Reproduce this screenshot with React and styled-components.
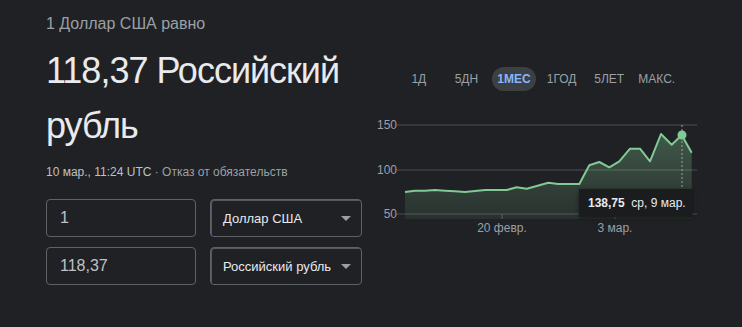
import React from 'react'
import styled, { createGlobalStyle } from 'styled-components'

const GlobalStyle = createGlobalStyle`
  body {
    margin: 0;
    background: #202124;
    font-family: "Liberation Sans", Arial, sans-serif;
  }
`

const tabs = ['1Д', '5ДН', '1МЕС', '1ГОД', '5ЛЕТ', 'МАКС.']

// points of the 1 month chart, in svg coords
const points = [
  [25, 77], [35, 75.7], [45, 75.7], [55, 75], [65, 75.7], [75, 76.3], [85, 77],
  [95, 76], [105, 75], [115, 75], [126.7, 75], [136.7, 72.3], [146.7, 73.7],
  [156.7, 71], [168.3, 67.7], [178.3, 69], [188.3, 69], [199.3, 69],
  [209.3, 50.3], [219.3, 47], [229.3, 52.3], [239.3, 46.3], [250, 33.7],
  [260, 33.7], [270, 46.3], [281, 19], [291.7, 29.7], [301.7, 20], [311.7, 37.7],
]

const grid = [
  { y: 10, label: '150' },
  { y: 55, label: '100' },
  { y: 99, label: '50' },
]

function Chart() {
  const line = points.map(p => p.join(',')).join(' ')
  const first = points[0]
  const last = points[points.length - 1]
  const area = `M${first[0]},104 L${line.replace(/ /g, ' L')} L${last[0]},104 Z`

  return (
    <ChartBox>
      <svg width="325" height="122" viewBox="-6 0 325 122">
        <defs>
          <linearGradient id="fill" x1="0" y1="19" x2="0" y2="104" gradientUnits="userSpaceOnUse">
            <stop offset="0" stopColor="#81c995" stopOpacity="0.33" />
            <stop offset="1" stopColor="#81c995" stopOpacity="0.09" />
          </linearGradient>
        </defs>
        {grid.map(g => (
          <g key={g.label}>
            <line x1="17" x2="317" y1={g.y} y2={g.y} stroke="#3c4043" strokeWidth="1.5" />
            <text x="17" y={g.y + 4} textAnchor="end" fontSize="12" fill="#9aa0a6"
              fontFamily="Liberation Sans, Arial, sans-serif">{g.label}</text>
          </g>
        ))}
        <path d={area} fill="url(#fill)" />
        <polyline points={line} fill="none" stroke="#81c995" strokeWidth="2" strokeLinejoin="round" />
        <line x1="302" x2="302" y1="10" y2="76" stroke="#9aa0a6" strokeWidth="1" strokeDasharray="2 2" />
        <circle cx="302" cy="20" r="4.5" fill="#81c995" />
        <line x1="122" x2="122" y1="99" y2="104" stroke="#5f6368" />
        <line x1="235" x2="235" y1="99" y2="104" stroke="#5f6368" />
        <text x="122" y="117" textAnchor="middle" fontSize="12" fill="#9aa0a6"
          fontFamily="Liberation Sans, Arial, sans-serif">20 февр.</text>
        <text x="235" y="117" textAnchor="middle" fontSize="12" fill="#9aa0a6"
          fontFamily="Liberation Sans, Arial, sans-serif">3 мар.</text>
      </svg>
      <Tooltip>
        <b>138,75</b>&nbsp; ср, 9 мар.
      </Tooltip>
    </ChartBox>
  )
}

function Select({ value }) {
  return (
    <SelectBox>
      <span>{value}</span>
      <svg width="10" height="5" viewBox="0 0 10 5">
        <path d="M0 0 L10 0 L5 5 Z" fill="#9aa0a6" />
      </svg>
    </SelectBox>
  )
}

export default function App() {
  return (
    <>
      <GlobalStyle />
      <Page>
        <Left>
          <Subtitle>1 Доллар США равно</Subtitle>
          <Result>118,37 Российский рубль</Result>
          <Meta>
            <span>10 мар., 11:24 UTC</span> · Отказ от обязательств
          </Meta>
          <Form>
            <Row>
              <Input>1</Input>
              <Select value="Доллар США" />
            </Row>
            <Row>
              <Input>118,37</Input>
              <Select value="Российский рубль" />
            </Row>
          </Form>
        </Left>
        <Right>
          <Tabs>
            {tabs.map(t => (
              <TabCell key={t}>
                <Tab $active={t === '1МЕС'}>{t}</Tab>
              </TabCell>
            ))}
          </Tabs>
          <Chart />
        </Right>
      </Page>
    </>
  )
}

const Page = styled.div`
  display: flex;
  align-items: flex-start;
  gap: 18px;
  padding: 12px 0 0 46px;
  height: 327px;
  box-sizing: border-box;
`
const Left = styled.div`
  width: 316px;
  display: flex;
  flex-direction: column;
`
const Subtitle = styled.div`
  font-size: 16px;
  line-height: 24px;
  color: #9aa0a6;
`
const Result = styled.div`
  margin-top: 7px;
  font-size: 36px;
  line-height: 55px;
  letter-spacing: -1px;
  color: #e8eaed;
`
const Meta = styled.div`
  margin-top: 11px;
  font-size: 12px;
  line-height: 16px;
  color: #9aa0a6;
  span {
    color: #bdc1c6;
  }
`
const Form = styled.div`
  margin-top: 19px;
  display: flex;
  flex-direction: column;
  gap: 10px;
`
const Row = styled.div`
  display: flex;
  gap: 14px;
`
const Input = styled.div`
  width: 150px;
  height: 38px;
  box-sizing: border-box;
  border: 1px solid #5f6368;
  border-radius: 4px;
  padding: 0 13px;
  display: flex;
  align-items: center;
  font-size: 16px;
  color: #bdc1c6;
`
const SelectBox = styled.div`
  width: 152px;
  height: 38px;
  box-sizing: border-box;
  border: 1px solid #5f6368;
  box-shadow: inset 1px 1px 0 rgba(154, 160, 166, 0.45);
  border-radius: 4px;
  padding: 0 10px 0 12px;
  display: flex;
  align-items: center;
  justify-content: space-between;
  font-size: 13px;
  color: #e8eaed;
`
const Right = styled.div`
  width: 317px;
  padding-top: 55px;
  display: flex;
  flex-direction: column;
`
const Tabs = styled.div`
  display: grid;
  grid-template-columns: repeat(6, 47.6px);
  margin-left: 15px;
`
const TabCell = styled.div`
  display: flex;
  justify-content: center;
`
const Tab = styled.div`
  height: 24px;
  padding: 0 5px;
  border-radius: 12px;
  display: flex;
  align-items: center;
  font-size: 12px;
  font-weight: ${p => (p.$active ? 700 : 400)};
  color: ${p => (p.$active ? '#8ab4f8' : '#9aa0a6')};
  background: ${p => (p.$active ? '#3c4043' : 'transparent')};
`
const ChartBox = styled.div`
  position: relative;
  margin: 24px 0 0 -6px;
  height: 122px;
  svg {
    display: block;
  }
`
const Tooltip = styled.div`
  position: absolute;
  left: 205px;
  top: 74px;
  width: 113px;
  height: 28px;
  box-sizing: border-box;
  padding-left: 9px;
  display: flex;
  align-items: center;
  background: #1b1c1e;
  box-shadow: 0 1px 4px rgba(0, 0, 0, 0.5);
  font-size: 12px;
  color: #e8eaed;
  white-space: nowrap;
  b {
    font-weight: 700;
  }
`
